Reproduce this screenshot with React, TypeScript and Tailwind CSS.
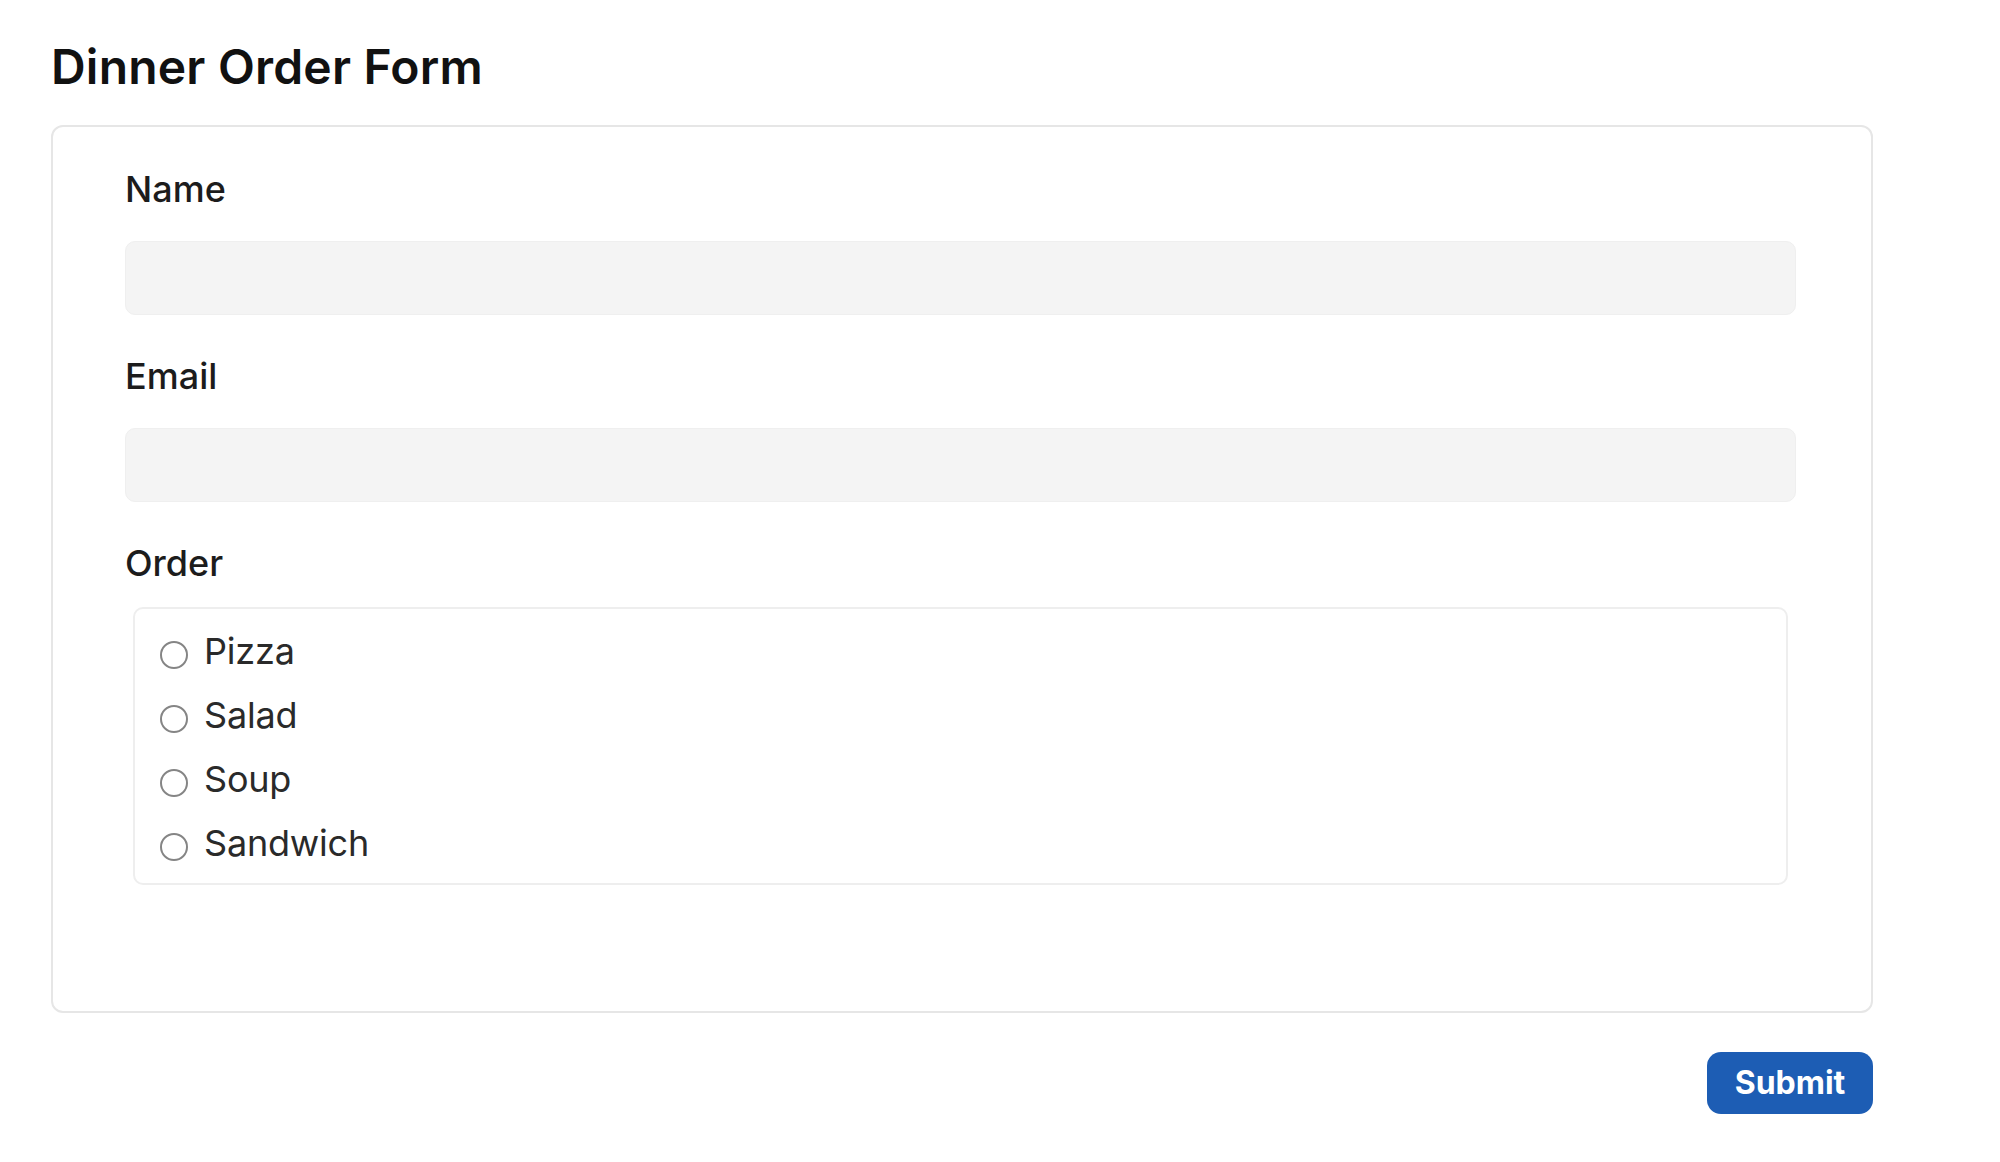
const options = ["Pizza", "Salad", "Soup", "Sandwich"];

export default function App() {
  return (
    <div className="min-h-screen bg-white font-['Inter',sans-serif] text-[#1a1a1a] pl-[51px] pr-[127px] pt-[38px]">
      <h1 className="text-[48px] leading-[58px] font-semibold text-[#111] tracking-[0.2px]">Dinner Order Form</h1>
      <form className="mt-[29px]">
        <div className="border-2 border-[#e6e6e6] rounded-[12px] pt-[40px] pl-[72px] pr-[75px] pb-[126px]">
          <label className="block text-[36px] leading-[44px] font-medium text-[#1c1c1c]">Name</label>
          <div className="mt-[30px] h-[74px] rounded-[10px] bg-[#f4f4f4] border border-[#efefef]" />
          <label className="block mt-[39px] text-[36px] leading-[44px] font-medium text-[#1c1c1c]">Email</label>
          <div className="mt-[30px] h-[74px] rounded-[10px] bg-[#f4f4f4] border border-[#efefef]" />
          <label className="block mt-[39px] text-[36px] leading-[44px] font-medium text-[#1c1c1c]">Order</label>
          <fieldset className="mt-[22px] mx-[8px] border-2 border-[#eeeeee] rounded-[10px] pt-[10px] pb-[8px] px-[25px]">
            {options.map((o) => (
              <label key={o} className="flex items-center h-[64px] gap-[16px]">
                <span className="mt-[8px] w-[28px] h-[28px] rounded-full border-2 border-[#858585] bg-white" />
                <span className="text-[36px] leading-[44px] text-[#2a2a2a] tracking-[-0.2px]">{o}</span>
              </label>
            ))}
          </fieldset>
        </div>
        <div className="flex justify-end mt-[39px]">
          <button type="button" className="h-[62px] w-[166px] rounded-[14px] bg-[#1d5db4] text-white text-[32px] font-bold">
            Submit
          </button>
        </div>
      </form>
    </div>
  );
}
